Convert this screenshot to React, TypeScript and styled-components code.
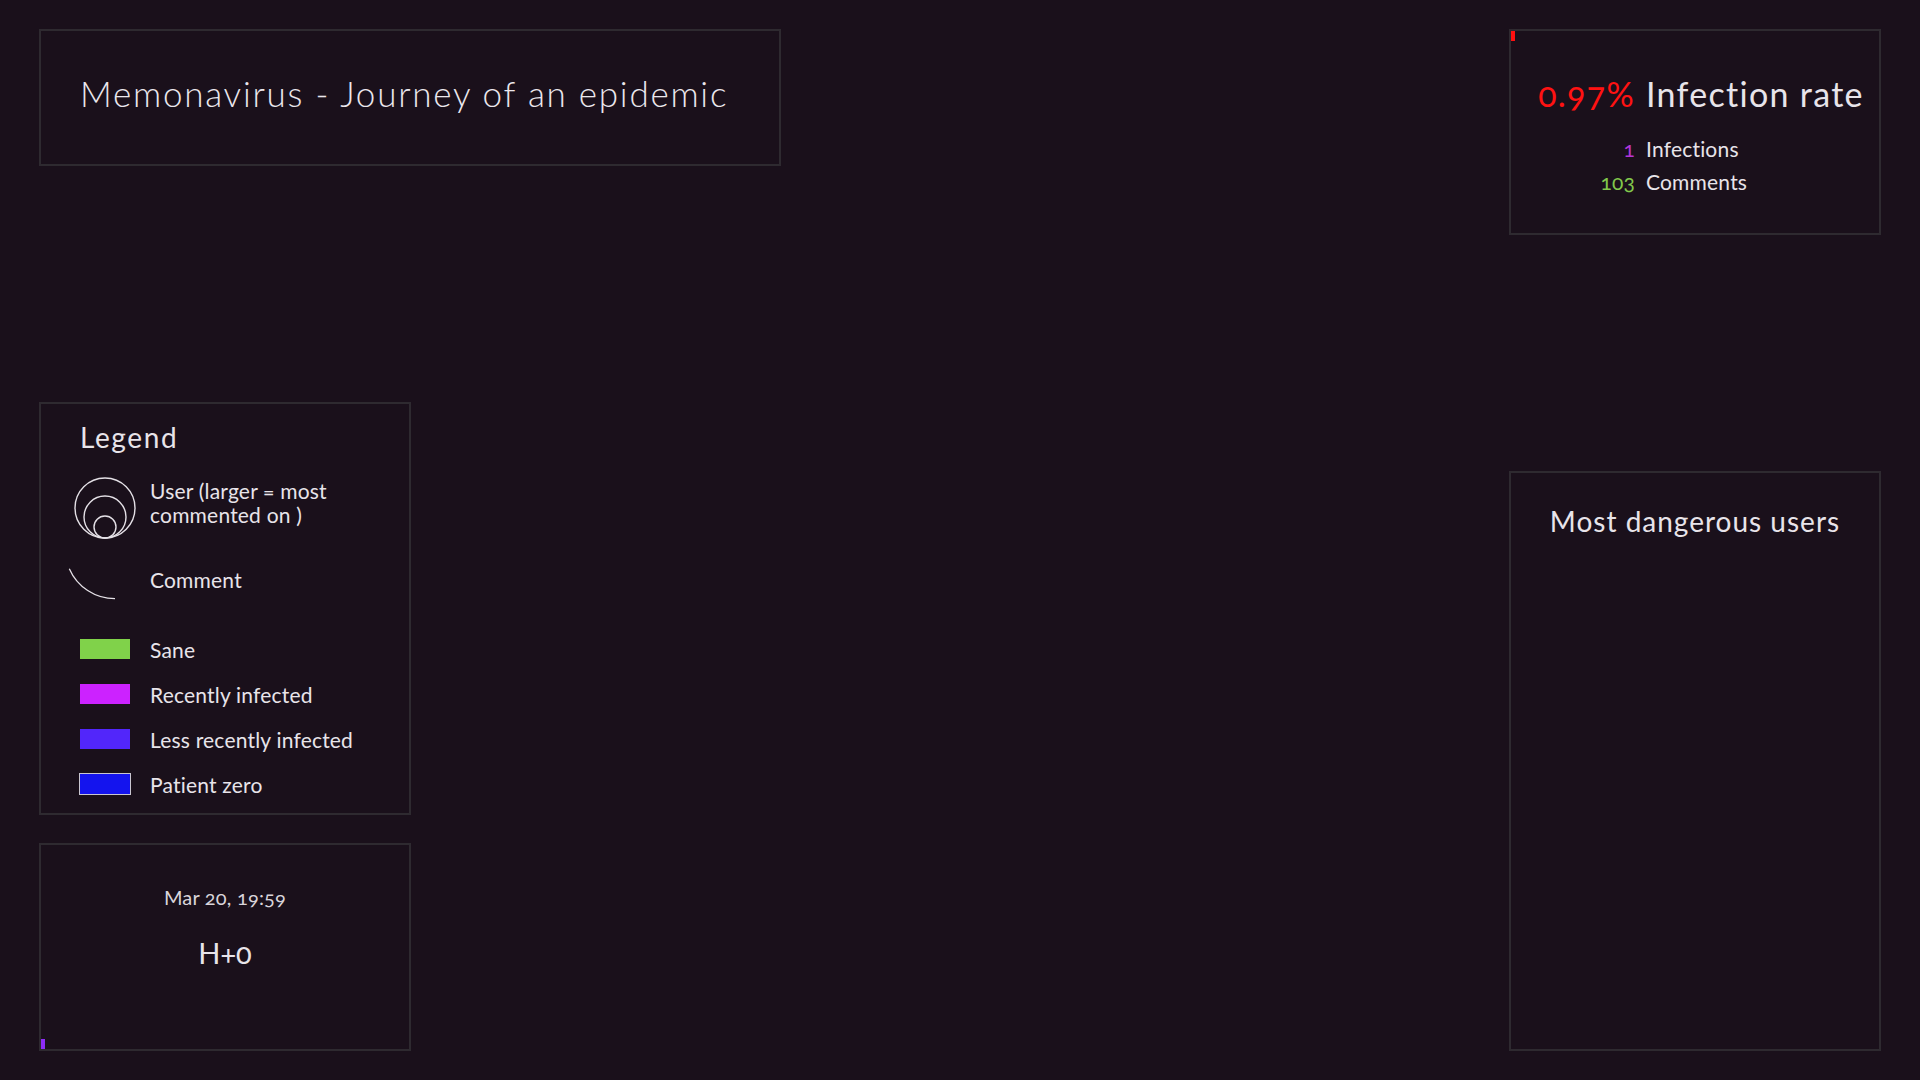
import React from "react";
import styled, { createGlobalStyle } from "styled-components";

const GlobalStyle = createGlobalStyle`
  html, body {
    margin: 0;
    padding: 0;
    background: #1a101b;
  }
  body {
    font-family: Lato, "Open Sans", sans-serif;
    color: #e8e4ea;
    font-variant-numeric: oldstyle-nums;
  }
  * { box-sizing: border-box; }
`;

const Page = styled.div`
  width: 1920px;
  height: 1080px;
  padding: 29px 39px;
  display: flex;
  justify-content: space-between;
  background: #1a101b;
`;

const Column = styled.div<{ $width: number }>`
  width: ${(p) => p.$width}px;
  display: flex;
  flex-direction: column;
`;

const Panel = styled.section<{ $width?: number; $height: number; $pushDown?: boolean }>`
  position: relative;
  width: ${(p) => (p.$width ? `${p.$width}px` : "100%")};
  height: ${(p) => p.$height}px;
  border: 2px solid #2e2a30;
  background: #1a101b;
  margin-top: ${(p) => (p.$pushDown ? "auto" : "0")};
`;

const TitlePanel = styled(Panel)`
  padding: 45px 39px 0;
`;

const Title = styled.h1`
  margin: 0;
  font-size: 35px;
  line-height: 1;
  font-weight: 300;
  letter-spacing: 1.75px;
  color: #ebe7ed;
`;

const Marker = styled.div<{ $color: string; $corner: "top" | "bottom" }>`
  position: absolute;
  left: 0;
  ${(p) => (p.$corner === "top" ? "top: 0;" : "bottom: 0;")}
  width: 4px;
  height: 10px;
  background: ${(p) => p.$color};
`;

const StatsPanel = styled(Panel)`
  padding: 46px 0 0 12px;
  display: flex;
  justify-content: center;
`;

const StatsGrid = styled.div`
  display: grid;
  grid-template-columns: auto auto;
  column-gap: 11px;
  row-gap: 12px;
  align-content: start;
`;

const StatNum = styled.span<{ $color: string; $big?: boolean }>`
  justify-self: end;
  color: ${(p) => p.$color};
  font-size: ${(p) => (p.$big ? 34 : 21)}px;
  font-weight: 400;
  letter-spacing: ${(p) => (p.$big ? 1.3 : 0.2)}px;
  line-height: 1;
  margin-bottom: ${(p) => (p.$big ? 15 : 0)}px;
`;

const StatLabel = styled.span<{ $big?: boolean }>`
  color: #e8e4ea;
  font-size: ${(p) => (p.$big ? 34 : 21)}px;
  font-weight: 400;
  letter-spacing: ${(p) => (p.$big ? 1.3 : 0.2)}px;
  line-height: 1;
  margin-bottom: ${(p) => (p.$big ? 15 : 0)}px;
`;

const LegendPanel = styled(Panel)`
  padding: 19px 20px 0 39px;
  display: flex;
  flex-direction: column;
`;

const PanelHeading = styled.h2`
  margin: 0;
  font-size: 28px;
  line-height: 1;
  font-weight: 400;
  letter-spacing: 1px;
  color: #e8e4ea;
`;

const LegendHeading = styled(PanelHeading)`
  letter-spacing: 1.6px;
`;

const ShapeGroup = styled.div`
  margin-top: 26px;
  display: flex;
  flex-direction: column;
  gap: 27px;
`;

const ColorGroup = styled.div`
  margin-top: 40px;
  display: flex;
  flex-direction: column;
  gap: 22.5px;
`;

const LegendRow = styled.div`
  display: flex;
  align-items: flex-start;
  gap: 20px;
`;

const IconCell = styled.div`
  width: 50px;
  flex: none;
  display: flex;
  justify-content: center;
  & > svg { flex: none; }
`;

const LegendLabel = styled.span<{ $offset?: number; $maxWidth?: number }>`
  font-size: 21px;
  line-height: 24px;
  letter-spacing: 0.2px;
  margin-top: ${(p) => (p.$offset ?? 0) - 1.5}px;
  max-width: ${(p) => (p.$maxWidth ? `${p.$maxWidth}px` : "none")};
  color: #e8e4ea;
`;

const Swatch = styled.div<{ $color: string; $outlined?: boolean }>`
  box-sizing: content-box;
  width: 50px;
  height: 20px;
  background: ${(p) => p.$color};
  border: ${(p) => (p.$outlined ? "1px solid #c9c6d0" : "none")};
  margin: ${(p) => (p.$outlined ? "-1px" : "0")};
`;

const TimePanel = styled(Panel)`
  margin-top: 28px;
  padding-top: 42px;
  display: flex;
  flex-direction: column;
  align-items: center;
`;

const DateText = styled.div`
  font-size: 20px;
  line-height: 1;
  letter-spacing: 0.2px;
  color: #d9d5db;
`;

const Clock = styled.div`
  margin-top: 31px;
  font-size: 29px;
  line-height: 1;
  color: #e8e4ea;
`;

const DangerPanel = styled(Panel)`
  padding-top: 34px;
  display: flex;
  justify-content: center;
`;

const UsersIcon = () => (
  <svg width="62" height="63" viewBox="0 0 62 63" fill="none" stroke="#e4e0e6" strokeWidth="1.4">
    <circle cx="31" cy="31" r="30" />
    <circle cx="31" cy="40" r="21" />
    <circle cx="31" cy="50" r="11" />
  </svg>
);

const CommentIcon = () => (
  <svg width="50" height="32" viewBox="0 0 50 32" fill="none" stroke="#e4e0e6" strokeWidth="1.3" style={{ overflow: "visible" }}>
    <path d="M -10.7 1.7 A 50 50 0 0 0 35 31.7" />
  </svg>
);

const colors = [
  { label: "Sane", color: "#80d24a" },
  { label: "Recently infected", color: "#cc22ff" },
  { label: "Less recently infected", color: "#5226fa" },
  { label: "Patient zero", color: "#1414ee", outlined: true },
];

export default function App() {
  return (
    <>
      <GlobalStyle />
      <Page>
        <Column $width={742}>
          <TitlePanel $width={742} $height={137}>
            <Title>Memonavirus - Journey of an epidemic</Title>
          </TitlePanel>

          <LegendPanel $width={372} $height={413} $pushDown>
            <LegendHeading>Legend</LegendHeading>
            <ShapeGroup>
              <LegendRow>
                <IconCell>
                  <UsersIcon />
                </IconCell>
                <LegendLabel $offset={3} $maxWidth={210}>
                  User (larger = most commented on )
                </LegendLabel>
              </LegendRow>
              <LegendRow>
                <IconCell>
                  <CommentIcon />
                </IconCell>
                <LegendLabel $offset={2}>Comment</LegendLabel>
              </LegendRow>
            </ShapeGroup>
            <ColorGroup>
              {colors.map((c) => (
                <LegendRow key={c.label}>
                  <IconCell>
                    <Swatch $color={c.color} $outlined={c.outlined} />
                  </IconCell>
                  <LegendLabel $offset={0}>{c.label}</LegendLabel>
                </LegendRow>
              ))}
            </ColorGroup>
          </LegendPanel>

          <TimePanel $width={372} $height={208}>
            <DateText>Mar 20, 19:59</DateText>
            <Clock>H+0</Clock>
            <Marker $color="#8c2cf5" $corner="bottom" />
          </TimePanel>
        </Column>

        <Column $width={372}>
          <StatsPanel $height={206}>
            <Marker $color="#ff1010" $corner="top" />
            <StatsGrid>
              <StatNum $color="#ff1212" $big>0.97%</StatNum>
              <StatLabel $big>Infection rate</StatLabel>
              <StatNum $color="#b535d8">1</StatNum>
              <StatLabel>Infections</StatLabel>
              <StatNum $color="#82c84c">103</StatNum>
              <StatLabel>Comments</StatLabel>
            </StatsGrid>
          </StatsPanel>

          <DangerPanel $height={580} $pushDown>
            <PanelHeading>Most dangerous users</PanelHeading>
          </DangerPanel>
        </Column>
      </Page>
    </>
  );
}
